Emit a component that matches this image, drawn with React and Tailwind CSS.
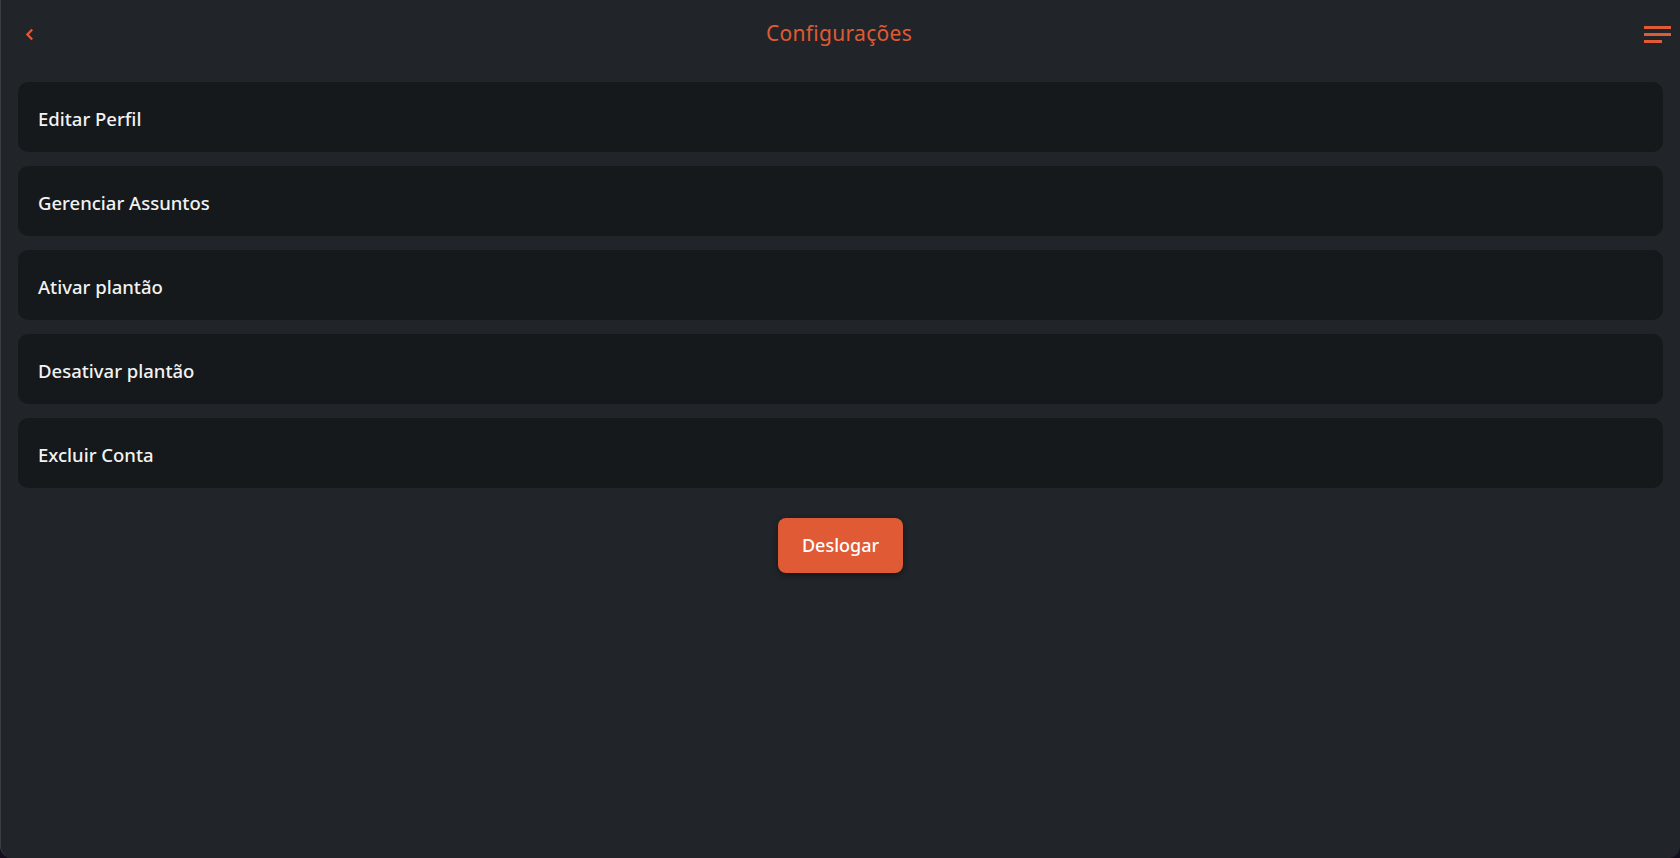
import React from "react";

const items = ["Editar Perfil", "Gerenciar Assuntos", "Ativar plantão", "Desativar plantão", "Excluir Conta"];

export default function App() {
  return (
    <div className="w-[1680px] h-[858px] bg-[#140d1f]">
      <div
        className="w-full h-full bg-[#212529] rounded-b-[12px] border-l border-[#3a3e44] flex flex-col"
        style={{ fontFamily: "'Noto Sans', Inter, sans-serif" }}
      >
        <header className="h-[68px] flex items-center justify-between pl-[24px] pr-[9px]">
          <svg width="9" height="13" viewBox="0 0 9 13" fill="none">
            <path d="M7.2 1.5L2.4 6.5L7.2 11.5" stroke="#e05a33" strokeWidth="2.3" strokeLinecap="butt" strokeLinejoin="miter" />
          </svg>
          <h1 className="text-[21px] text-[#e05a33] font-normal tracking-[0.3px]">
            Configurações
          </h1>
          <div className="flex flex-col gap-[4px] w-[27px] pt-[1px]">
            <span className="block h-[3px] w-[27px] bg-[#e05a33]" />
            <span className="block h-[3px] w-[27px] bg-[#e05a33]" />
            <span className="block h-[3px] w-[18px] bg-[#e05a33]" />
          </div>
        </header>
        <div className="flex flex-col gap-[14px] pl-[17px] pr-[17px] pt-[14px]">
          {items.map((t) => (
            <div key={t} className="h-[70px] bg-[#16191c] rounded-[10px] flex items-center pl-[20px]">
              <span className="text-[18.5px] font-medium text-[#f2f2f2] pt-[3px]">{t}</span>
            </div>
          ))}
        </div>
        <div className="flex justify-center pt-[30px]">
          <button className="w-[125px] h-[55px] rounded-[8px] bg-[#e05a35] text-white text-[18px] font-medium shadow-[0_2px_6px_rgba(0,0,0,0.45)]">
            Deslogar
          </button>
        </div>
      </div>
    </div>
  );
}
